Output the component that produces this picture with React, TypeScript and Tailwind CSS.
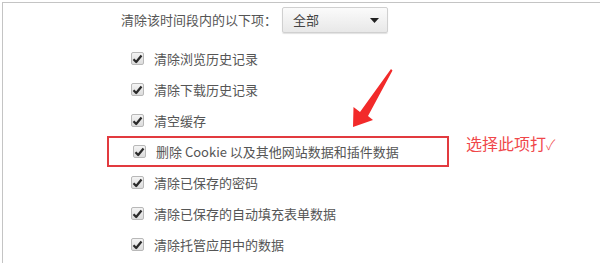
const items = [
    "清除浏览历史记录",
    "清除下载历史记录",
    "清空缓存",
    "删除 Cookie 以及其他网站数据和插件数据",
    "清除已保存的密码",
    "清除已保存的自动填充表单数据",
    "清除托管应用中的数据",
]

function Check() {
    return (
        <span className="flex h-[13px] w-[13px] items-center justify-center rounded-[2px] border border-[#b8b8b8] bg-gradient-to-b from-[#f4f4f4] to-[#dcdcdc]">
            <svg width="11" height="10" viewBox="0 0 11 10">
                <path d="M1.5 5.2 L4.2 8 L9.5 1.5" fill="none" stroke="#2a2a2a" strokeWidth="2.2" strokeLinejoin="round" />
            </svg>
        </span>
    )
}

function Row({ label }: { label: string }) {
    return (
        <div className="flex h-[31px] items-center gap-[10px]">
            <Check />
            <span className="text-[13px] text-[#555]">{label}</span>
        </div>
    )
}

export default function App() {
    return (
        <div className="relative h-[263px] w-[600px] overflow-hidden bg-white pl-[2px] pt-[2px] font-['Noto_Sans_CJK_SC',sans-serif]">
            <div className="h-full w-full border-l border-t border-[#c4c4c4]">

                <div className="ml-[118px] mt-[4px] flex h-[26px] items-center gap-[5px]">
                    <span className="text-[13px] text-[#555]">清除该时间段内的以下项：</span>
                    <div className="flex h-[26px] w-[106px] items-center justify-between rounded-[2px] border border-[#d0d0d0] bg-gradient-to-b from-[#fbfbfb] to-[#e8e8e8] pl-[10px] pr-[8px] shadow-[0_1px_1px_rgba(0,0,0,0.12)]">
                        <span className="text-[13px] text-[#444]">全部</span>
                        <svg width="9" height="5" viewBox="0 0 9 5">
                            <path d="M0 0 H9 L4.5 5 Z" fill="#222" />
                        </svg>
                    </div>
                </div>

                <div className="mt-[10px] flex flex-col">
                    {items.map((label, i) =>
                        i === 3 ? (
                            <div key={label} className="flex items-center">
                                <div className="ml-[104px] flex h-[31px] w-[342px] items-center gap-[10px] border-2 border-[#e23a3f] pl-[24px]">
                                    <Check />
                                    <span className="text-[13px] text-[#555]">{label}</span>
                                </div>
                                <span className="ml-[17px] mt-[-18px] text-[16px] text-[#f0474a]">
                                    选择此项打<span className="text-[14px] font-light">✓</span>
                                </span>
                            </div>
                        ) : (
                            <div key={label} className="ml-[128px]">
                                <Row label={label} />
                            </div>
                        )
                    )}
                </div>

            </div>

            <svg className="absolute left-[340px] top-[60px]" width="60" height="75" viewBox="0 0 60 75">
                <path d="M51 9 L52.5 10.5 L28 56 L33 60 L13 67 L13.5 47 L20 52 Z" fill="#f22a2a" />
            </svg>
        </div>
    )
}
